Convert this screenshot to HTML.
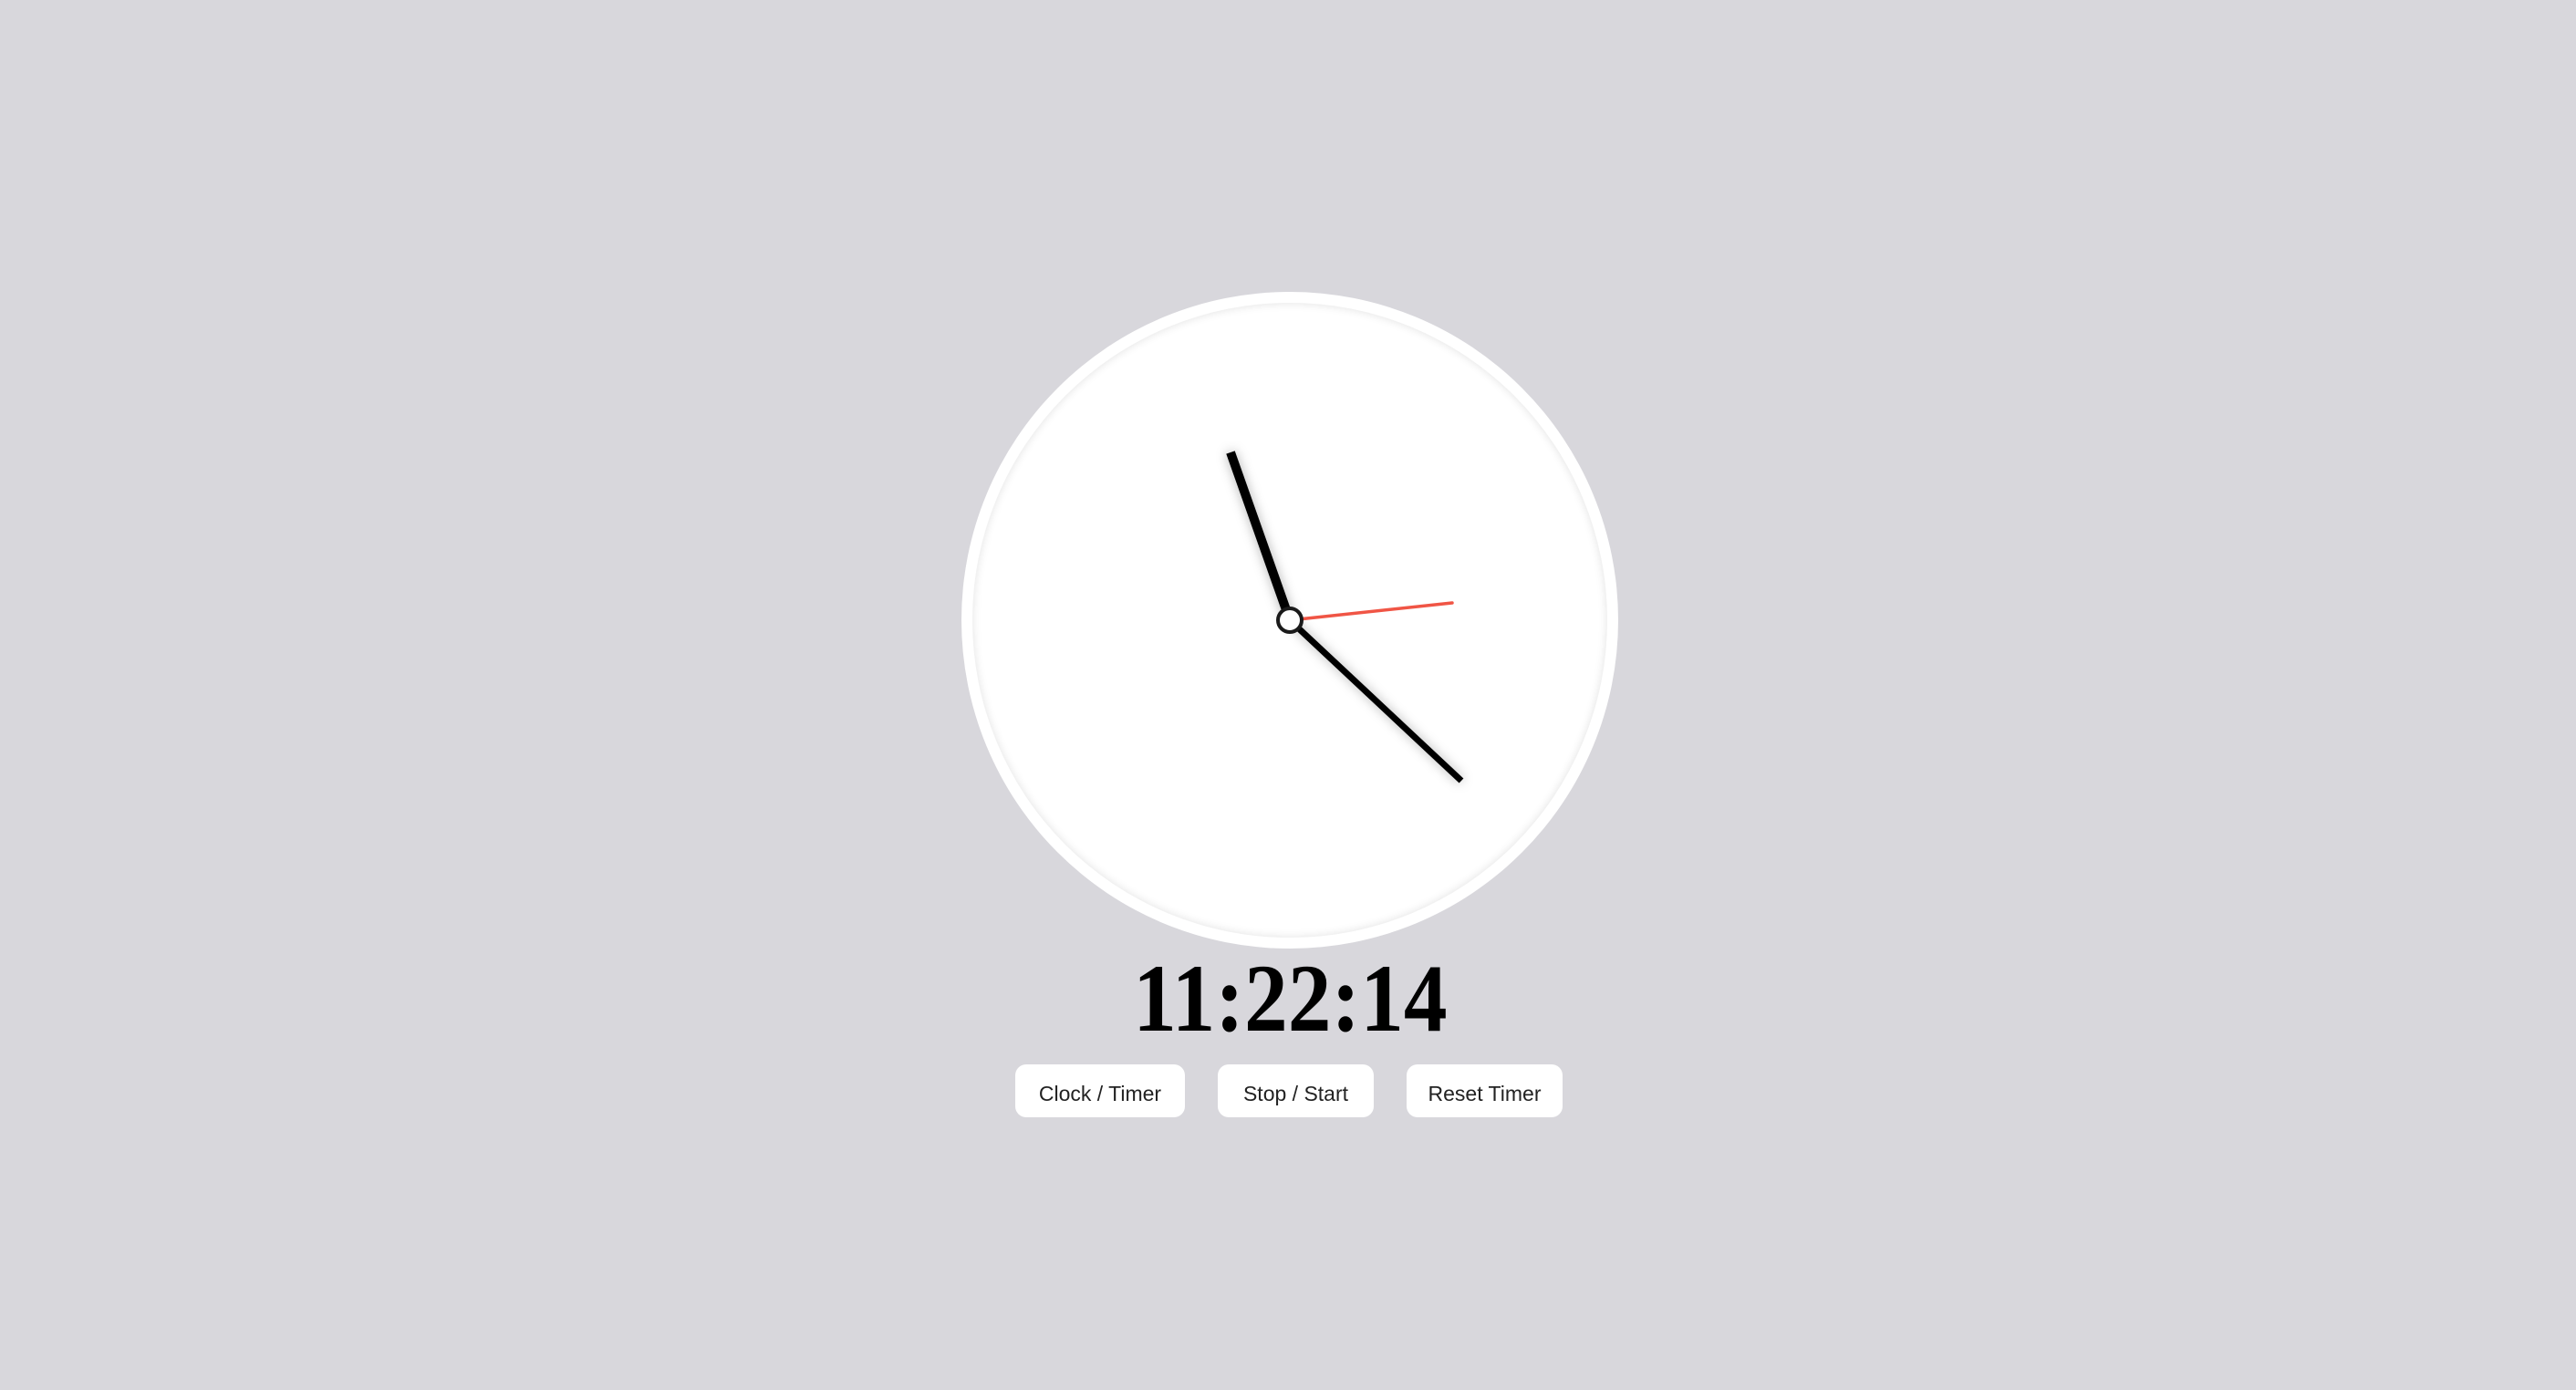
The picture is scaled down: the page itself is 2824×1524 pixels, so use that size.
<!DOCTYPE html>
<html><head><meta charset="utf-8"><style>
html,body{margin:0;padding:0;width:2824px;height:1524px;background:#d8d7dc;overflow:hidden;font-family:"Liberation Sans",sans-serif}
.face{position:absolute;left:1054px;top:320px;width:720px;height:720px;border-radius:50%;background:#fff}
.inner{position:absolute;left:12px;top:12px;right:12px;bottom:12px;border-radius:50%;box-shadow:inset 0 0 10px rgba(0,0,0,0.12)}
svg{position:absolute;left:0;top:0}
.time{position:absolute;left:0;width:2828px;top:1042px;text-align:center;font-family:"Liberation Serif",serif;font-weight:bold;font-size:106px;line-height:106px;color:#000}
.time span{display:inline-block;transform:scaleX(0.9)}
.btn{position:absolute;top:1167px;height:58px;background:#fff;border-radius:12px;font-size:23px;color:#222;line-height:64px;text-align:center}
</style></head><body>
<div class="face"><div class="inner"></div></div>
<svg width="2824" height="1524">
<defs><filter id="s" x="-50%" y="-50%" width="200%" height="200%"><feDropShadow dx="0" dy="0" stdDeviation="6" flood-color="#000" flood-opacity="0.3"/></filter></defs>
<line x1="1414" y1="680" x2="1349" y2="496" stroke="#000" stroke-width="10" filter="url(#s)"/>
<line x1="1414" y1="680" x2="1602" y2="856" stroke="#000" stroke-width="7" filter="url(#s)"/>
<line x1="1414" y1="680" x2="1592" y2="661" stroke="#f05545" stroke-width="3.5" stroke-linecap="round"/>
<circle cx="1414" cy="680" r="13" fill="#fff" stroke="#1a1a1a" stroke-width="4"/>
</svg>
<div class="time"><span>11:22:14</span></div>
<div class="btn" style="left:1113px;width:186px">Clock / Timer</div>
<div class="btn" style="left:1335px;width:171px">Stop / Start</div>
<div class="btn" style="left:1542px;width:171px">Reset Timer</div>
</body></html>
